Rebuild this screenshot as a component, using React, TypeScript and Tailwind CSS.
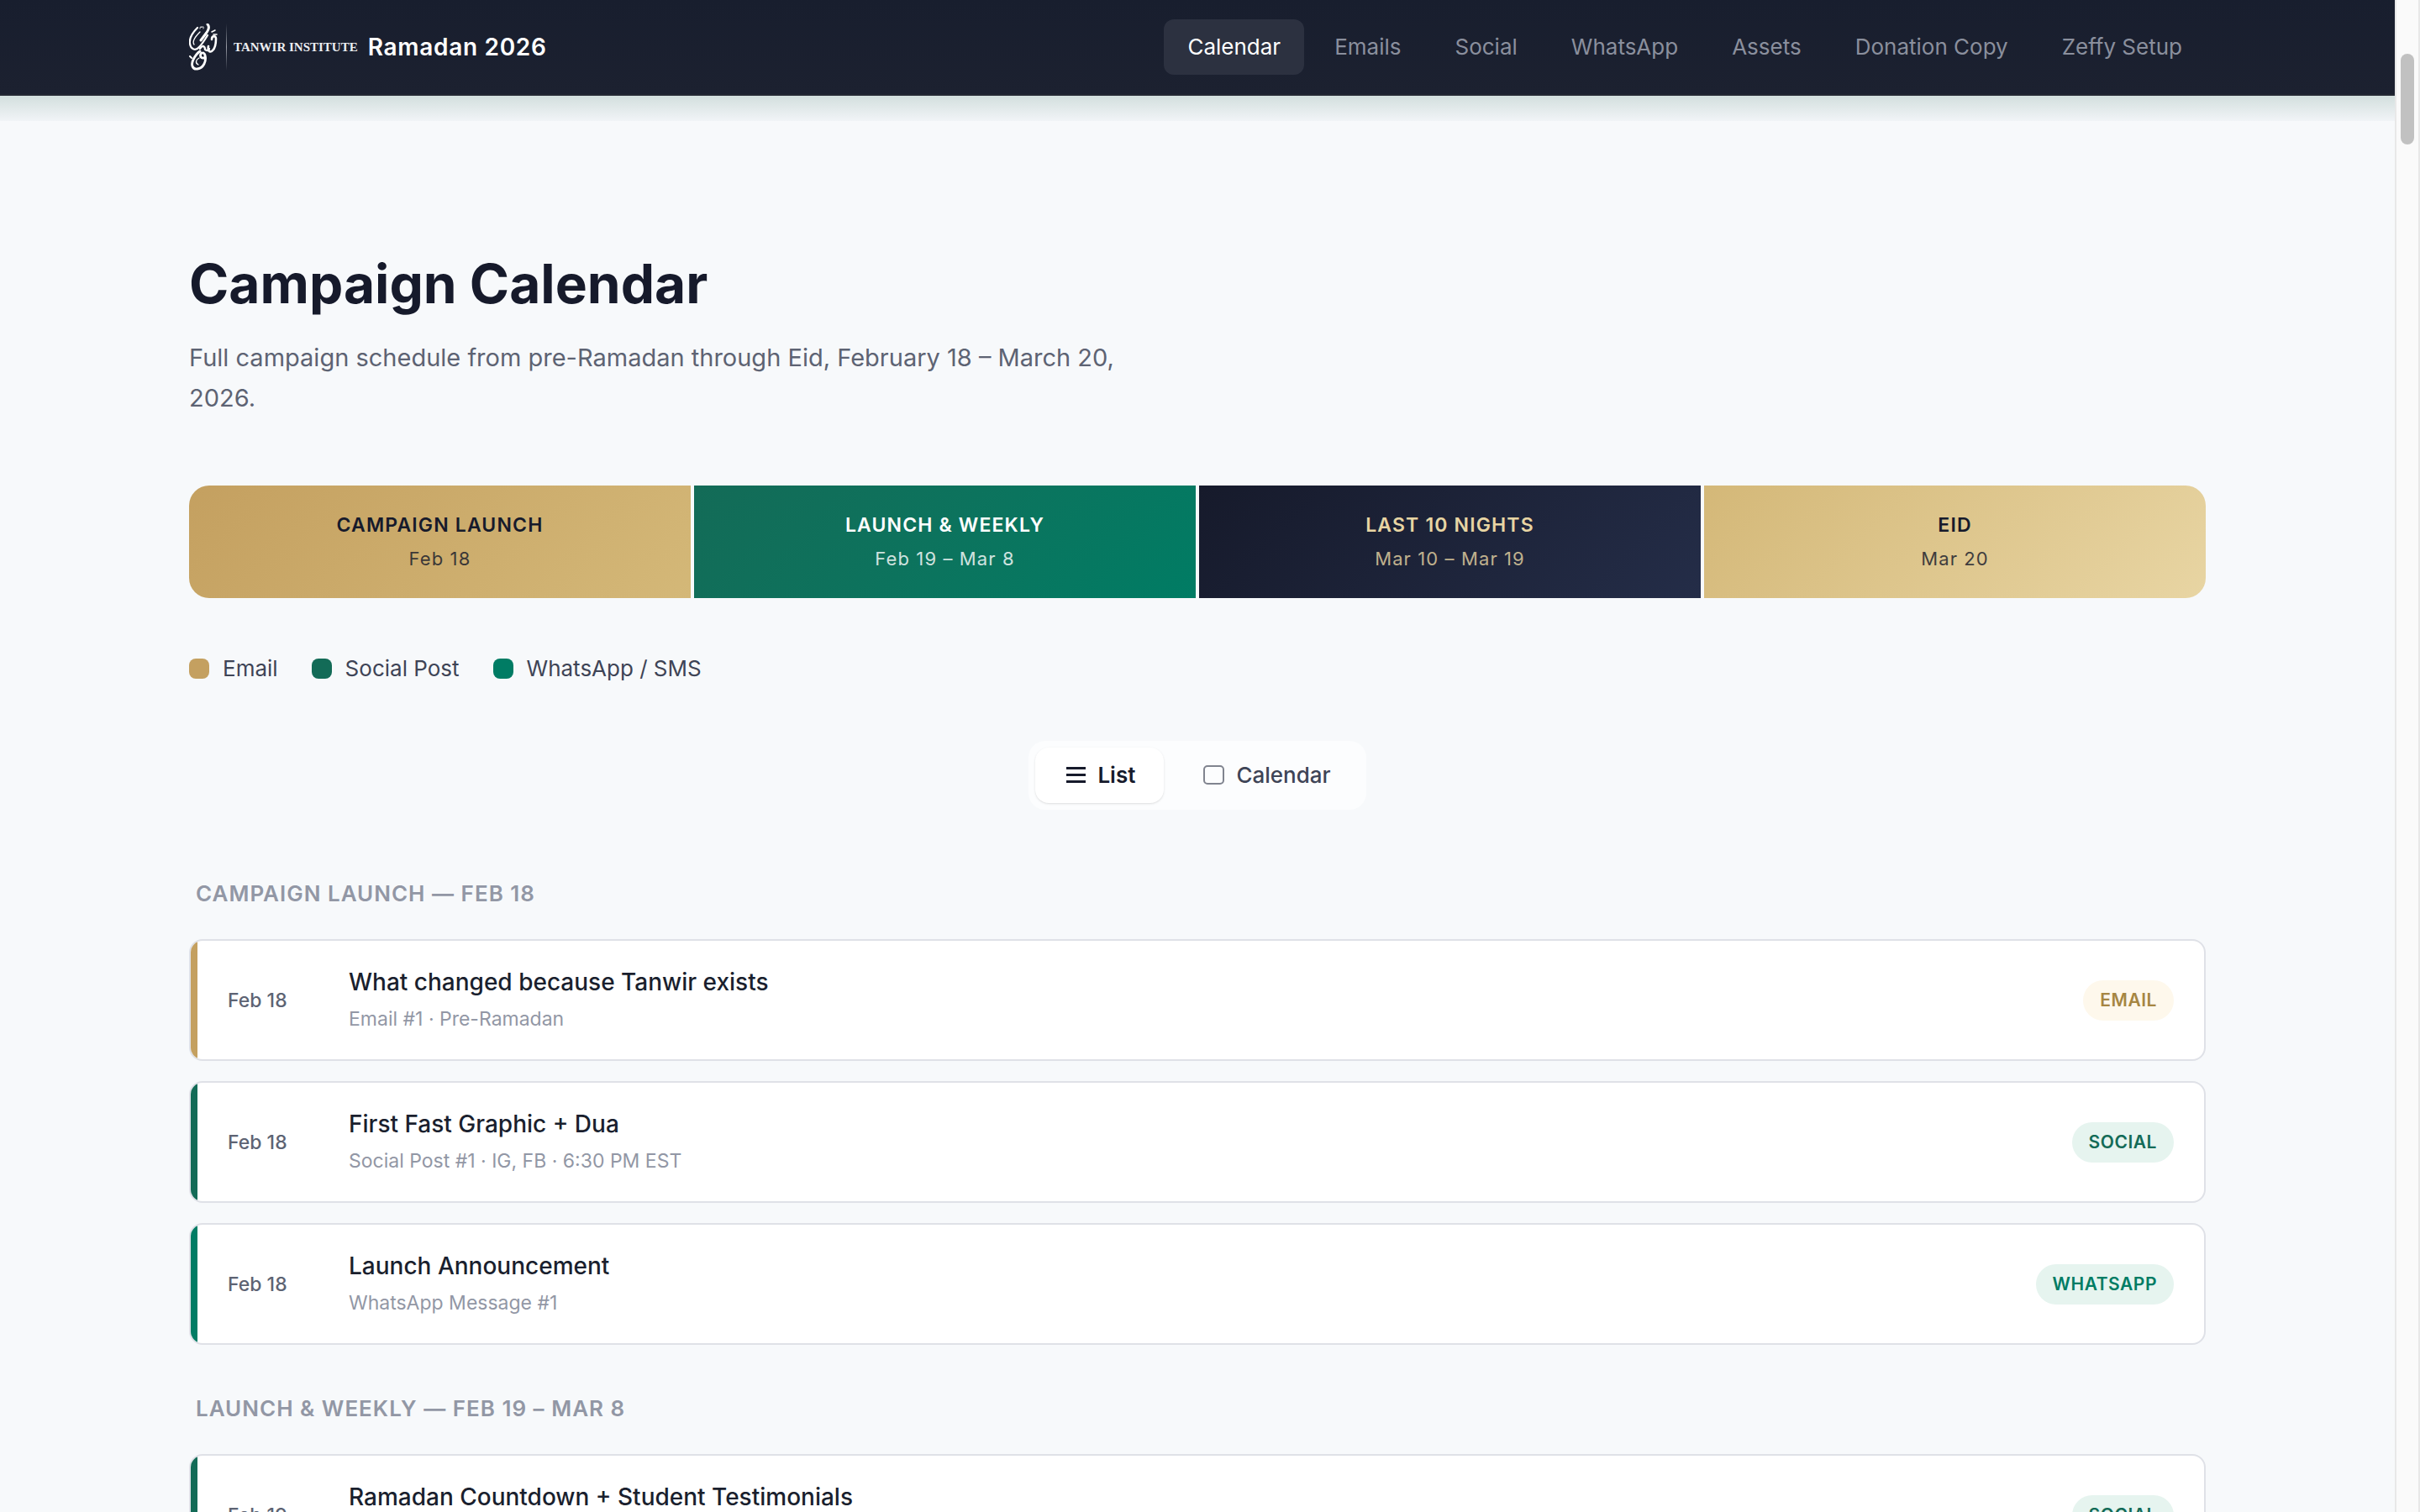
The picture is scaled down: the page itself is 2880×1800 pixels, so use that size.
const NAV = ["Calendar", "Emails", "Social", "WhatsApp", "Assets", "Donation Copy", "Zeffy Setup"];

const PHASES = [
  { name: "Campaign Launch", dates: "Feb 18", style: "from-[#c4a060] to-[#d4b878] text-[#161a2b]" },
  { name: "Launch & Weekly", dates: "Feb 19 – Mar 8", style: "from-[#136b57] to-[#007c64] text-white" },
  { name: "Last 10 Nights", dates: "Mar 10 – Mar 19", style: "from-[#161a2b] to-[#242d48] text-[#e8d5a3]" },
  { name: "Eid", dates: "Mar 20", style: "from-[#d4b878] to-[#e8d5a3] text-[#161a2b]" },
];

const LEGEND = [
  { label: "Email", color: "bg-[#c4a060]" },
  { label: "Social Post", color: "bg-[#136b57]" },
  { label: "WhatsApp / SMS", color: "bg-[#007c64]" },
];

const KINDS = {
  email: { label: "Email", bar: "bg-[#c4a060]", badge: "bg-[#fef8ec] text-[#a68642]" },
  social: { label: "Social", bar: "bg-[#136b57]", badge: "bg-[#e6f4ef] text-[#136b57]" },
  whatsapp: { label: "WhatsApp", bar: "bg-[#007c64]", badge: "bg-[#e6f4ef] text-[#007c64]" },
};

type Item = { date: string; title: string; detail: string; kind: keyof typeof KINDS };

const SECTIONS: { heading: string; items: Item[] }[] = [
  {
    heading: "Campaign Launch — Feb 18",
    items: [
      { date: "Feb 18", title: "What changed because Tanwir exists", detail: "Email #1 · Pre-Ramadan", kind: "email" },
      { date: "Feb 18", title: "First Fast Graphic + Dua", detail: "Social Post #1 · IG, FB · 6:30 PM EST", kind: "social" },
      { date: "Feb 18", title: "Launch Announcement", detail: "WhatsApp Message #1", kind: "whatsapp" },
    ],
  },
  {
    heading: "Launch & Weekly — Feb 19 – Mar 8",
    items: [
      { date: "Feb 19", title: "Ramadan Countdown + Student Testimonials", detail: "Social Post #2 · IG, FB", kind: "social" },
    ],
  },
];

function Logo() {
  return (
    <span className="flex items-center">
      <svg viewBox="0 0 34 56" className="h-14 w-[34px]" fill="none" stroke="#fff" strokeLinecap="round" strokeLinejoin="round" aria-hidden="true">
        <path d="M10 5 C4 11 0 18 1 24 C2 31 8 33 12 28 C16 24 19 19 22 14" strokeWidth="2.2" />
        <path d="M6 25 C3 21 9 14 13 10" strokeWidth="1.3" />
        <path d="M22 1 C25 4 23 8 20 12 L14 20" strokeWidth="3" />
        <path d="M13 6 C13 3 15 3 15 5 C16 3 18 3 17 6" strokeWidth="1" />
        <path d="M27 19 C27 14 32 14 32 18 C32 25 30 31 27 33 C24 35 22 31 23 27" strokeWidth="2.6" />
        <path d="M27 10 L31 8 M29 13 L33 13" strokeWidth="1.6" />
        <path d="M13 30 C16 25 19 27 19 31 C21 33 23 32 24 30" strokeWidth="2.4" />
        <path d="M15 35 C12 38 14 42 18 41 C20 39 19 36 17 35 M19 38 C21 45 17 53 10 54 C4 55 2 49 5 43 C7 39 10 35 13 33" strokeWidth="2.8" />
        <path d="M11 49 C7 47 8 43 12 41" strokeWidth="1.3" />
        <path d="M1 39 L3 41" strokeWidth="2" />
      </svg>
      <span className="ml-[10px] h-14 w-px bg-gradient-to-b from-transparent via-[#9a9da6] to-transparent" />
      <span className="ml-2 font-['Liberation_Serif',serif] text-[15px] font-bold leading-6 text-[#eceef2]">TANWIR INSTITUTE</span>
    </span>
  );
}

function Card({ item }: { item: Item }) {
  const kind = KINDS[item.kind];
  return (
    <li className="flex h-[145px] overflow-hidden rounded-2xl border-2 border-[#dfe1e7] bg-white">
      <span className={`w-2 shrink-0 ${kind.bar}`} />
      <div className="flex flex-1 items-center pl-9 pr-9">
        <span className="w-36 shrink-0 text-[23px] font-medium leading-8 text-[#5d6373]">{item.date}</span>
        <div className="flex-1">
          <h3 className="text-[28px] font-medium leading-10 text-[#1a1f2e]">{item.title}</h3>
          <p className="mt-1 text-[23px] leading-10 text-[#9297a5]">{item.detail}</p>
        </div>
        <span className={`rounded-full px-5 py-2 text-[21px] font-semibold uppercase leading-8 tracking-wide ${kind.badge}`}>{kind.label}</span>
      </div>
    </li>
  );
}

export default function App() {
  return (
    <div className="flex h-screen overflow-hidden bg-[#f7f9fb] font-['Inter',sans-serif] text-[#161a2b]">
      <div className="min-w-0 flex-1">
        <header className="relative h-[114px] border-b-2 border-[#242833] bg-gradient-to-b from-[#181e2e] to-[#1c2130]">
          <div className="mx-auto flex h-full max-w-[2400px] items-center justify-between">
            <a href="#" className="flex items-center gap-3">
              <Logo />
              <span className="text-[28px] font-semibold leading-10 tracking-wide text-white">Ramadan 2026</span>
            </a>
            <nav className="flex gap-2">
              {NAV.map((label, i) => (
                <a key={label} href="#" className={`rounded-xl px-7 py-[13px] text-[26px] leading-10 ${i === 0 ? "bg-[#2c3140] text-white" : "text-[#8a8f9d]"}`}>
                  {label}
                </a>
              ))}
            </nav>
          </div>
          <div className="absolute inset-x-0 top-[114px] h-[30px] bg-gradient-to-b from-[#d3dfde] to-[#f1f4f7]" />
        </header>

        <main className="mx-auto max-w-[2400px] pt-[184px]">
          <h1 className="text-[64px] font-bold leading-20">Campaign Calendar</h1>
          <p className="mt-6 max-w-[1160px] text-[29px] leading-12 text-[#5d6373]">
            Full campaign schedule from pre-Ramadan through Eid, February 18 – March 20, 2026.
          </p>

          <div className="mt-20 grid grid-cols-4 gap-1 overflow-hidden rounded-3xl">
            {PHASES.map((phase) => (
              <div key={phase.name} className={`flex h-[134px] flex-col justify-center bg-linear-135 text-center ${phase.style}`}>
                <p className="text-[23px] font-semibold uppercase leading-10 tracking-wider">{phase.name}</p>
                <p className="text-[22px] leading-10 tracking-wider opacity-80">{phase.dates}</p>
              </div>
            ))}
          </div>

          <ul className="mt-16 flex gap-10">
            {LEGEND.map((entry) => (
              <li key={entry.label} className="flex items-center gap-4 text-[26px] leading-10 text-[#3e4456]">
                <span className={`size-6 rounded-lg ${entry.color}`} />
                {entry.label}
              </li>
            ))}
          </ul>

          <div className="mx-auto mt-[66px] flex w-fit gap-3 rounded-[20px] bg-[#fcfdfe] p-2">
            <button type="button" aria-pressed="true" className="flex items-center gap-3 rounded-2xl bg-white px-[34px] py-[13px] text-[26px] font-semibold leading-10 shadow-sm">
              <svg viewBox="0 0 28 28" className="size-7" stroke="currentColor" strokeWidth="3" aria-hidden="true">
                <path d="M3 5.5h23M3 13.5h23M3 21.5h23" />
              </svg>
              List
            </button>
            <button type="button" aria-pressed="false" className="flex items-center gap-3 rounded-2xl px-[34px] py-[13px] text-[26px] font-medium leading-10 text-[#3e4456]">
              <svg viewBox="0 0 28 28" className="size-7" fill="none" stroke="#80848f" strokeWidth="2" aria-hidden="true">
                <rect x="2" y="3" width="23" height="21" rx="4" />
              </svg>
              Calendar
            </button>
          </div>

          {SECTIONS.map((section, i) => (
            <section key={section.heading} className={i === 0 ? "mt-20" : "mt-14"}>
              <h2 className="pl-2 text-[26px] font-semibold uppercase leading-10 tracking-[1px] text-[#9297a5]">{section.heading}</h2>
              <ul className="mt-[34px] flex flex-col gap-6">
                {section.items.map((item) => (
                  <Card key={item.title} item={item} />
                ))}
              </ul>
            </section>
          ))}
        </main>
      </div>

      <div className="w-[30px] shrink-0 border-x-2 border-[#e8e8e8] bg-[#fafafa] pt-16" aria-hidden="true">
        <div className="mx-auto h-[108px] w-4 rounded-full bg-[#c1c1c1]" />
      </div>
    </div>
  );
}
